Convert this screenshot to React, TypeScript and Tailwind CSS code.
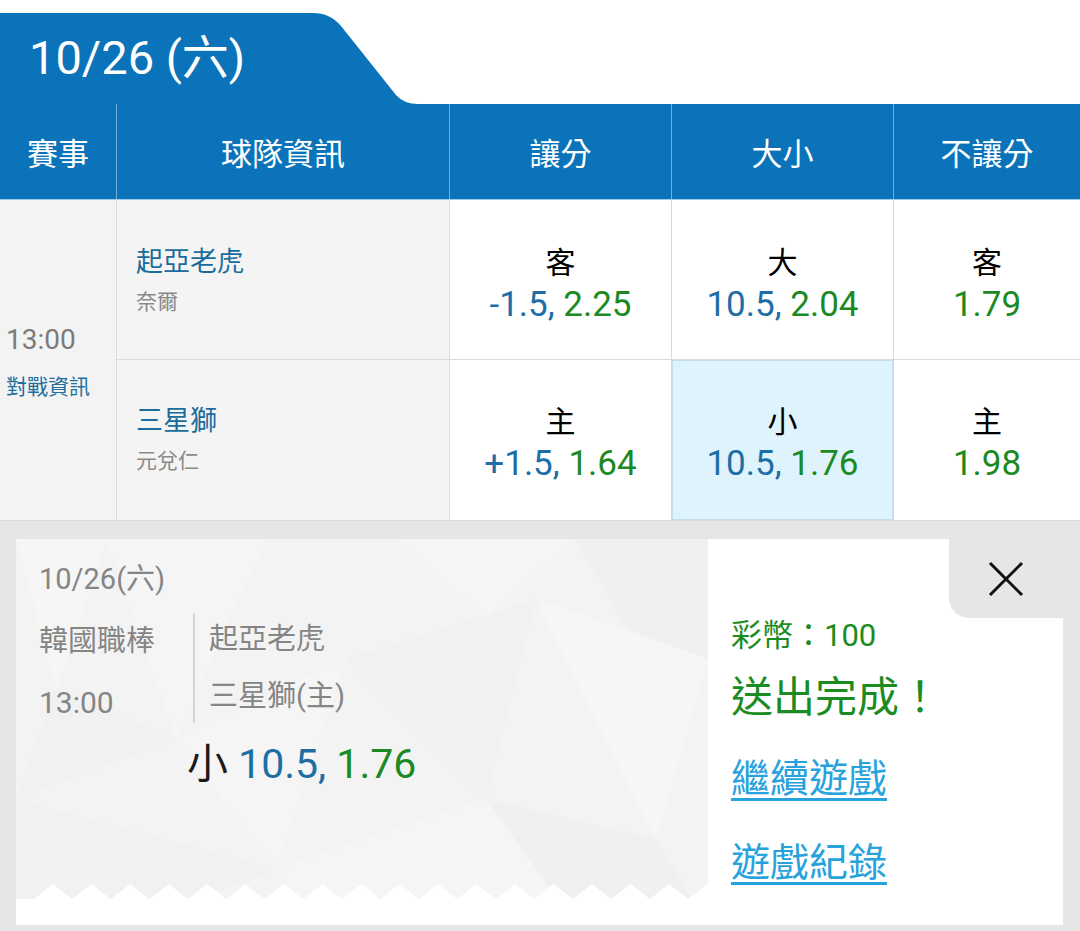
const cols = 'grid grid-cols-[117px_333px_222px_222px_186px]'

const games = [
  {
    name: '起亞老虎',
    pitcher: '奈爾',
    spread: { side: '客', line: '-1.5', odd: '2.25' },
    total: { side: '大', line: '10.5', odd: '2.04' },
    money: { side: '客', odd: '1.79' },
  },
  {
    name: '三星獅',
    pitcher: '元兌仁',
    spread: { side: '主', line: '+1.5', odd: '1.64' },
    total: { side: '小', line: '10.5', odd: '1.76' },
    money: { side: '主', odd: '1.98' },
  },
]

function OddsCell({
  side,
  line,
  odd,
  active,
  last,
  top,
}: {
  side: string
  line?: string
  odd: string
  active?: boolean
  last?: boolean
  top?: boolean
}) {
  return (
    <div
      className={`flex flex-col items-center ${top ? 'border-b pt-[44px]' : 'pt-[43px]'} border-[#dadada] ${
        last ? '' : 'border-r'
      } ${active ? 'bg-[#dff3fc] shadow-[inset_0_0_0_1px_#c3dfee]' : 'bg-white'}`}
    >
      <p className="text-[30px] leading-[38px] text-black">{side}</p>
      <p className="text-[35px] leading-[46px]">
        {line ? <span className="text-[#1d6ea5]">{line}, </span> : null}
        <span className="text-[#1c8a24]">{odd}</span>
      </p>
    </div>
  )
}

function Pattern() {
  return (
    <svg
      aria-hidden="true"
      className="absolute inset-0 h-full w-full"
      viewBox="0 0 692 386"
      preserveAspectRatio="none"
    >
      <rect width="692" height="386" fill="#f3f3f3" />
      <polygon points="0,0 90,0 40,150" fill="#f6f6f6" />
      <polygon points="90,0 250,0 160,200" fill="#f5f5f5" />
      <polygon points="40,150 160,200 0,260" fill="#f1f1f1" />
      <polygon points="160,200 330,120 260,330" fill="#f5f5f5" />
      <polygon points="330,120 520,60 470,260" fill="#f1f1f1" />
      <polygon points="380,0 560,0 470,80" fill="#f5f5f5" />
      <polygon points="560,0 692,0 692,120 610,90" fill="#f0f0f0" />
      <polygon points="520,60 692,120 640,300" fill="#f6f6f6" />
      <polygon points="0,260 260,330 120,386 0,386" fill="#f1f1f1" />
      <polygon points="260,330 470,260 560,386 300,386" fill="#f5f5f5" />
      <polygon points="470,260 640,300 692,386 560,386" fill="#f0f0f0" />
    </svg>
  )
}

function Zigzag() {
  const teeth = Array.from({ length: 19 })
  return (
    <svg
      aria-hidden="true"
      className="absolute bottom-0 left-0 h-[42px] w-full"
      viewBox="0 0 692 42"
      preserveAspectRatio="none"
    >
      <path
        d={
          'M0 16 ' +
          teeth.map((_, i) => `L${i * 38.5 + 18} 16 L${i * 38.5 + 37} 1 L${i * 38.5 + 56} 16`).join(' ') +
          ' L692 16 L692 42 L0 42 Z'
        }
        fill="#ffffff"
      />
    </svg>
  )
}

export default function App() {
  return (
    <main className="flex h-[931px] w-[1080px] flex-col overflow-hidden bg-white font-['Roboto','Noto_Sans_CJK_TC',sans-serif]">
      <div className="flex h-[104px] items-end">
        <div className="flex h-[91px] w-[300px] items-center bg-[#0b73ba] pl-[29px] text-[47px] text-white">
          10/26 (六)
        </div>
        <svg aria-hidden="true" viewBox="0 0 120 91" className="h-[91px] w-[120px]">
          <path d="M0 0 H13 Q30 0 41 13 L96 82 Q104 91 118 91 H0 Z" fill="#0b73ba" />
        </svg>
      </div>

      <div className={`${cols} h-[96px] border-b border-[#9ccbeb] bg-[#0b73ba] pt-[8px] text-[31px] text-white`}>
        <div className="-mt-[8px] flex items-center justify-center border-r border-[#6fb0dd] pt-[8px]">賽事</div>
        <div className="-mt-[8px] flex items-center justify-center border-r border-[#6fb0dd] pt-[8px]">球隊資訊</div>
        <div className="-mt-[8px] flex items-center justify-center border-r border-[#6fb0dd] pt-[8px]">讓分</div>
        <div className="-mt-[8px] flex items-center justify-center border-r border-[#6fb0dd] pt-[8px]">大小</div>
        <div className="-mt-[8px] flex items-center justify-center pt-[8px]">不讓分</div>
      </div>

      <div className={`${cols} grid-rows-[160px_160px] border-b border-[#dadada]`}>
        <div className="row-span-2 border-r border-[#dadada] bg-[#f3f3f3] pl-[6px] pt-[122px]">
          <p className="text-[28px] leading-[36px] text-[#7b7b7b]">13:00</p>
          <p className="mt-[14px] text-[21px] leading-[30px] text-[#1f6f9e]">對戰資訊</p>
        </div>
        {games.map((g, i) => (
          <div key={g.name} className="contents">
            <div
              className={`border-r border-[#dadada] bg-[#f4f4f4] pl-[19px] ${
                i === 0 ? 'border-b pt-[44px]' : 'pt-[43px]'
              }`}
            >
              <p className="text-[27px] leading-[36px] text-[#1a6c9c]">{g.name}</p>
              <p className="mt-[7px] text-[21px] leading-[30px] text-[#8a8a8a]">{g.pitcher}</p>
            </div>
            <OddsCell {...g.spread} top={i === 0} />
            <OddsCell {...g.total} active={i === 1} top={i === 0} />
            <OddsCell side={g.money.side} odd={g.money.odd} last top={i === 0} />
          </div>
        ))}
      </div>

      <div className="flex-1 bg-[#e6e6e6] pl-[16px] pr-[17px] pt-[18px]">
        <div className="flex h-[386px] bg-white">
          <div className="relative w-[692px] overflow-hidden">
            <Pattern />
            <Zigzag />
            <div className="relative pl-[23px] pt-[22px] text-[#858585]">
              <p className="text-[29px] leading-[36px]">10/26(六)</p>
              <div className="mt-[16px] flex h-[110px]">
                <div className="w-[154px] pt-[10px]">
                  <p className="text-[29px] leading-[36px]">韓國職棒</p>
                  <p className="mt-[26px] text-[30px] leading-[36px]">13:00</p>
                </div>
                <div className="border-l-2 border-[#d4d4d4] pl-[14px] pt-[8px]">
                  <p className="text-[29px] leading-[36px]">起亞老虎</p>
                  <p className="mt-[21px] text-[29px] leading-[36px]">三星獅(主)</p>
                </div>
              </div>
              <p className="ml-[148px] mt-[17px] text-[41px] leading-[48px]">
                <span className="text-[#1a1a1a]">小 </span>
                <span className="text-[#1d6ea5]">10.5, </span>
                <span className="text-[#1c8a24]">1.76</span>
              </p>
            </div>
          </div>

          <div className="relative flex-1 pl-[23px] pt-[77px]">
            <button className="absolute right-0 top-0 flex h-[79px] w-[114px] items-center justify-center rounded-bl-[20px] bg-[#e6e6e6]">
              <svg viewBox="0 0 36 36" className="h-[36px] w-[36px]" stroke="#111" strokeWidth="3" aria-label="關閉">
                <line x1="2" y1="2" x2="34" y2="34" />
                <line x1="34" y1="2" x2="2" y2="34" />
              </svg>
            </button>
            <p className="text-[31px] leading-[40px] text-[#1b8c22]">彩幣：100</p>
            <p className="mt-[17px] text-[42px] leading-[50px] text-[#1b8c22]">送出完成！</p>
            <a className="mt-[31px] block text-[39px] leading-[50px] text-[#27a2dc] underline decoration-[3px] underline-offset-[6px]">
              繼續遊戲
            </a>
            <a className="mt-[34px] block text-[39px] leading-[50px] text-[#27a2dc] underline decoration-[3px] underline-offset-[6px]">
              遊戲紀錄
            </a>
          </div>
        </div>
      </div>
    </main>
  )
}
